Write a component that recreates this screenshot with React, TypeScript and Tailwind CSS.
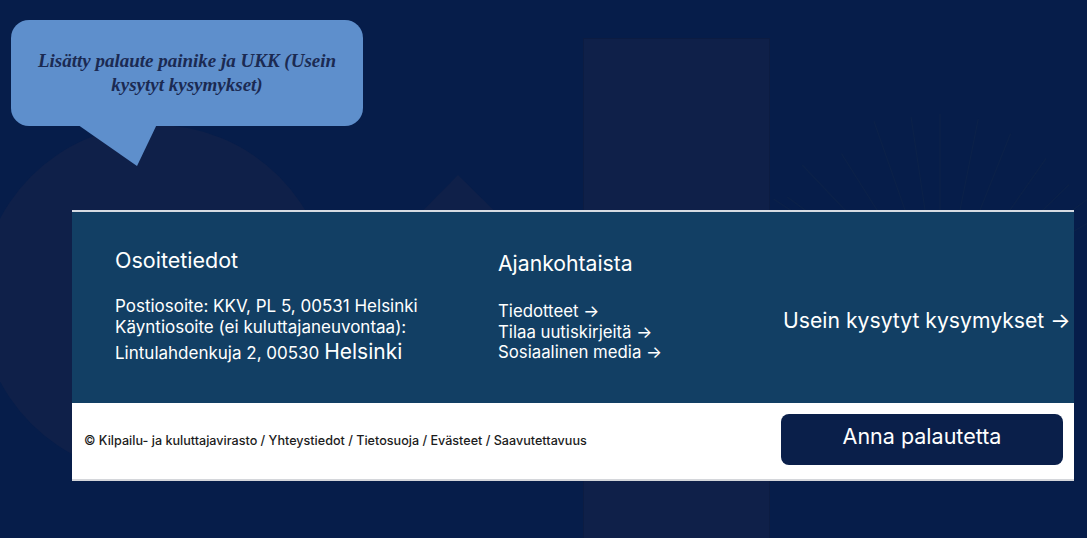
import React from "react";

const rays: { dx: number; len: number }[] = [
  { dx: -150, len: 200 },
  { dx: -135, len: 190 },
  { dx: -95, len: 200 },
  { dx: -63, len: 185 },
  { dx: -35, len: 200 },
  { dx: -15, len: 195 },
  { dx: 0, len: 196 },
  { dx: 20, len: 195 },
  { dx: 40, len: 190 },
  { dx: 70, len: 185 },
  { dx: 103, len: 180 },
  { dx: 133, len: 185 },
  { dx: 170, len: 200 },
];

function Background() {
  const fx = 940;
  const fy = 310;
  return (
    <div className="pointer-events-none absolute inset-0 overflow-hidden">
      <div className="absolute left-[-20px] top-[125px] h-[350px] w-[350px] rounded-full bg-[#0f2049]" />
      <svg className="absolute left-0 top-0" width="1087" height="538">
        <polygon points="458,175 300,335 620,335" fill="#0f2049" />
        {rays.map((r, i) => {
          const ang = Math.atan2(r.dx, 100);
          const x2 = fx + Math.sin(ang) * r.len;
          const y2 = fy - Math.cos(ang) * r.len;
          return (
            <line key={i} x1={fx} y1={fy} x2={x2} y2={y2} stroke="#0b2149" strokeWidth="1.3" />
          );
        })}
      </svg>
      <div className="absolute left-[583px] top-[38px] h-[520px] w-[187px] border border-[#0c1c42] bg-[#0f2049]" />
    </div>
  );
}

function Bubble() {
  return (
    <div className="absolute left-[11px] top-[20px] z-20">
      <svg className="absolute left-0 top-0" width="360" height="150">
        <polygon points="60,100 148,100 126,146" fill="#5e8fcc" />
      </svg>
      <div
        className="relative flex h-[106px] w-[352px] items-start justify-center rounded-[18px] bg-[#5e8fcc] px-4 pt-[29px] text-center text-[19px] font-bold italic leading-[24px] text-[#1b2a52]"
        style={{ fontFamily: '"Liberation Serif", "Times New Roman", serif' }}
      >
        <p>
          Lisätty palaute painike ja UKK (Usein
          <br />
          kysytyt kysymykset)
        </p>
      </div>
    </div>
  );
}

export default function App() {
  return (
    <div
      className="relative h-[538px] w-[1087px] overflow-hidden bg-[#061d4a]"
      style={{ fontFamily: 'Inter, "Noto Sans", sans-serif' }}
    >
      <Background />
      <Bubble />
      <div className="relative z-10 pl-[72px] pt-[210px]">
        <div className="w-[1002px] border-t-2 border-[#d6dbe2]">
          <div className="flex h-[191px] bg-[#123f64] text-white">
            <div className="w-[426px] pl-[43px] pt-[34px]">
              <h2 className="text-[21.5px] leading-[28px]">Osoitetiedot</h2>
              <div className="mt-[22px] text-[17px] leading-[21px]">
                <p>Postiosoite: KKV, PL 5, 00531 Helsinki</p>
                <p>Käyntiosoite (ei kuluttajaneuvontaa):</p>
                <p className="mt-[2px] leading-[24px]">
                  Lintulahdenkuja 2, 00530 <span className="text-[21px]">Helsinki</span>
                </p>
              </div>
            </div>
            <div className="w-[240px] pt-[37px]">
              <h2 className="text-[21.2px] leading-[28px]">Ajankohtaista</h2>
              <ul className="mt-[24px] text-[16.8px] leading-[20.5px]">
                <li>Tiedotteet →</li>
                <li>Tilaa uutiskirjeitä →</li>
                <li>Sosiaalinen media →</li>
              </ul>
            </div>
            <div className="pt-[94px]">
              <p className="pl-[45px] text-[21.2px] leading-[28px]">Usein kysytyt kysymykset →</p>
            </div>
          </div>
          <div className="flex h-[78px] items-center justify-between border-b-2 border-[#d4d6da] bg-white pl-[12px] pr-[11px]">
            <p className="text-[12.6px] font-medium text-[#1c1c1c]">
              © Kilpailu- ja kuluttajavirasto / Yhteystiedot / Tietosuoja / Evästeet / Saavutettavuus
            </p>
            <button className="mb-[3px] flex h-[51px] w-[282px] items-start justify-center rounded-[8px] bg-[#0a1f4a] pt-[9px] text-[21.5px] leading-[26px] text-white">
              Anna palautetta
            </button>
          </div>
        </div>
      </div>
    </div>
  );
}
